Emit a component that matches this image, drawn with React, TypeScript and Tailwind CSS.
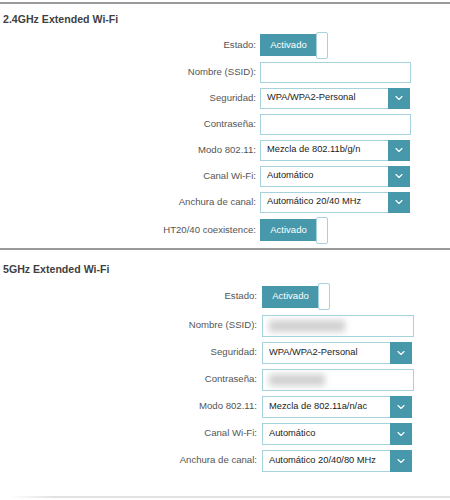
import React from 'react';
import { ChevronDown } from 'lucide-react';

interface Field {
  label: string;
  kind: 'toggle' | 'input' | 'select' | 'blur';
  value?: string;
  blurWidth?: number;
}

const section24: Field[] = [
  { label: 'Estado:', kind: 'toggle', value: 'Activado' },
  { label: 'Nombre (SSID):', kind: 'input' },
  { label: 'Seguridad:', kind: 'select', value: 'WPA/WPA2-Personal' },
  { label: 'Contraseña:', kind: 'input' },
  { label: 'Modo 802.11:', kind: 'select', value: 'Mezcla de 802.11b/g/n' },
  { label: 'Canal Wi-Fi:', kind: 'select', value: 'Automático' },
  { label: 'Anchura de canal:', kind: 'select', value: 'Automático 20/40 MHz' },
  { label: 'HT20/40 coexistence:', kind: 'toggle', value: 'Activado' },
];

const section5: Field[] = [
  { label: 'Estado:', kind: 'toggle', value: 'Activado' },
  { label: 'Nombre (SSID):', kind: 'blur', blurWidth: 76 },
  { label: 'Seguridad:', kind: 'select', value: 'WPA/WPA2-Personal' },
  { label: 'Contraseña:', kind: 'blur', blurWidth: 56 },
  { label: 'Modo 802.11:', kind: 'select', value: 'Mezcla de 802.11a/n/ac' },
  { label: 'Canal Wi-Fi:', kind: 'select', value: 'Automático' },
  { label: 'Anchura de canal:', kind: 'select', value: 'Automático 20/40/80 MHz' },
];

const Toggle = ({ text }: { text: string }) => (
  <div className="flex items-center">
    <div className="w-[57px] h-[22px] bg-[#4798aa] text-white text-[9.5px] flex items-center justify-center">
      {text}
    </div>
    <div className="w-[12px] h-[27px] -ml-[1px] bg-white border border-[#a6d2dc] rounded-[2px]" />
  </div>
);

const Control = ({ field, tall }: { field: Field; tall: boolean }) => {
  const h = tall ? 'h-[22px]' : 'h-[21px]';
  const w = tall ? 'w-[152px]' : 'w-[151px]';
  if (field.kind === 'toggle') return <Toggle text={field.value || ''} />;
  if (field.kind === 'input')
    return <div className={`${w} ${h} border border-[#a6d2dc] bg-white`} />;
  if (field.kind === 'blur')
    return (
      <div className={`${w} ${h} border border-[#a6d2dc] bg-white flex items-center pl-[6px] overflow-hidden`}>
        <div
          className="h-[12px] bg-[#d2d2d2] blur-[3px]"
          style={{ width: field.blurWidth }}
        />
      </div>
    );
  return (
    <div className={`w-[150px] ${h} border border-[#a6d2dc] bg-white flex`}>
      <div className="flex-1 flex items-center pl-[6px] text-[9.3px] text-[#222]">{field.value}</div>
      <div className="w-[22px] -my-[1px] -mr-[1px] bg-[#4798aa] flex items-center justify-center text-white">
        <ChevronDown size={12} strokeWidth={2.2} />
      </div>
    </div>
  );
};

const Section = ({ title, fields, tall }: { title: string; fields: Field[]; tall: boolean }) => (
  <div className="border-t-2 border-[#9a9a9a]">
    <h2 className={`${tall ? 'pt-[13px]' : 'pt-[9px]'} pl-[3px] text-[10.6px] leading-[12px] font-bold text-[#3f3f3f]`}>
      {title}
    </h2>
    <div className={`${tall ? 'mt-[7px]' : 'mt-[6px]'} flex flex-col`}>
      {fields.map((f, i) => {
        const first = i === 0;
        const last = i === fields.length - 1 && f.kind === 'toggle';
        const rowH = tall
          ? first
            ? 'h-[29px] mb-[1px]'
            : 'h-[27px]'
          : first
          ? 'h-[28px]'
          : last
          ? 'h-[30px]'
          : 'h-[26px]';
        return (
          <div key={f.label} className={`flex items-center ${rowH}`}>
            <div
              className={`${tall ? 'w-[257px] mr-[5px]' : 'w-[256px] mr-[4px]'} text-right text-[9.6px] text-[#555]`}
            >
              {f.label}
            </div>
            <Control field={f} tall={tall} />
          </div>
        );
      })}
    </div>
  </div>
);

export default function App() {
  return (
    <div className="w-[450px] h-[500px] bg-white overflow-hidden pt-[2px] font-['Liberation_Sans',Arial,sans-serif]">
      <Section title="2.4GHz Extended Wi-Fi" fields={section24} tall={false} />
      <div className="mt-[3px]">
        <Section title="5GHz Extended Wi-Fi" fields={section5} tall={true} />
      </div>
      <div className="mt-[22px] h-[2px] bg-gradient-to-r from-transparent from-[2%] to-[#e2e2e2] to-[12%]" />
    </div>
  );
}
